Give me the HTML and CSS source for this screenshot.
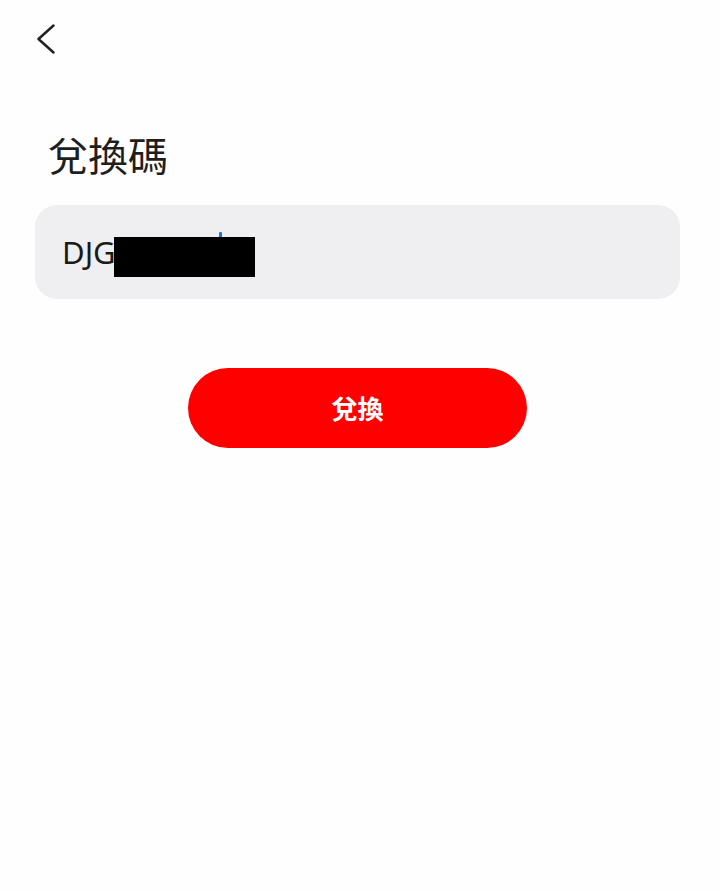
FILE: index.html
```html
<!DOCTYPE html>
<html lang="zh-Hant">
<head>
<meta charset="utf-8">
<title>兌換碼</title>
<link rel="stylesheet" href="styles.css">
</head>
<body>
<div class="page">
  <div class="topbar">
    <svg class="back" width="18" height="30" viewBox="0 0 18 30" aria-hidden="true">
      <polyline points="16.5,1.5 1.5,15 16.5,28.5" fill="none" stroke="#222" stroke-width="2.5" stroke-linecap="round" stroke-linejoin="round"/>
    </svg>
  </div>
  <h1 class="title">兌換碼</h1>
  <div class="field">
    <span class="value">DJG</span>
    <span class="caret"></span>
    <span class="redact"></span>
  </div>
  <button class="submit">兌換</button>
</div>
</body>
</html>
```
FILE: styles.css
```css
html, body {
  margin: 0;
  padding: 0;
  background: #fefefe;
}
body {
  font-family: "Noto Sans", "Noto Sans CJK TC", sans-serif;
  color: #1c1c1c;
}
.page {
  width: 720px;
  height: 892px;
}
.topbar {
  padding: 24px 0 0 37px;
  height: 30px;
}
.back {
  display: block;
}
.title {
  margin: 80px 0 0 48px;
  font-family: "Noto Sans CJK TC", sans-serif;
  font-weight: 400;
  font-size: 40px;
  line-height: 40px;
  color: #1e1e1e;
}
.field {
  position: relative;
  margin: 31px 40px 0 35px;
  height: 94px;
  border-radius: 22px;
  background: #efeef1;
  display: flex;
  align-items: center;
  padding-left: 27px;
}
.value {
  font-family: "Noto Sans", sans-serif;
  font-size: 31px;
  line-height: 1;
  color: #1a1a1a;
}
.caret {
  position: absolute;
  left: 184px;
  top: 27px;
  width: 3px;
  height: 30px;
  background: #1a73e8;
  border-radius: 1px;
}
.redact {
  position: absolute;
  left: 79px;
  top: 32px;
  width: 141px;
  height: 40px;
  background: #000;
}
.submit {
  display: block;
  margin: 69px 0 0 188px;
  width: 339px;
  height: 80px;
  border: none;
  border-radius: 40px;
  background: #fe0000;
  color: #fff;
  font-family: "Noto Sans CJK TC", sans-serif;
  font-weight: 700;
  font-size: 26px;
  line-height: 1;
  padding: 0;
}
```
